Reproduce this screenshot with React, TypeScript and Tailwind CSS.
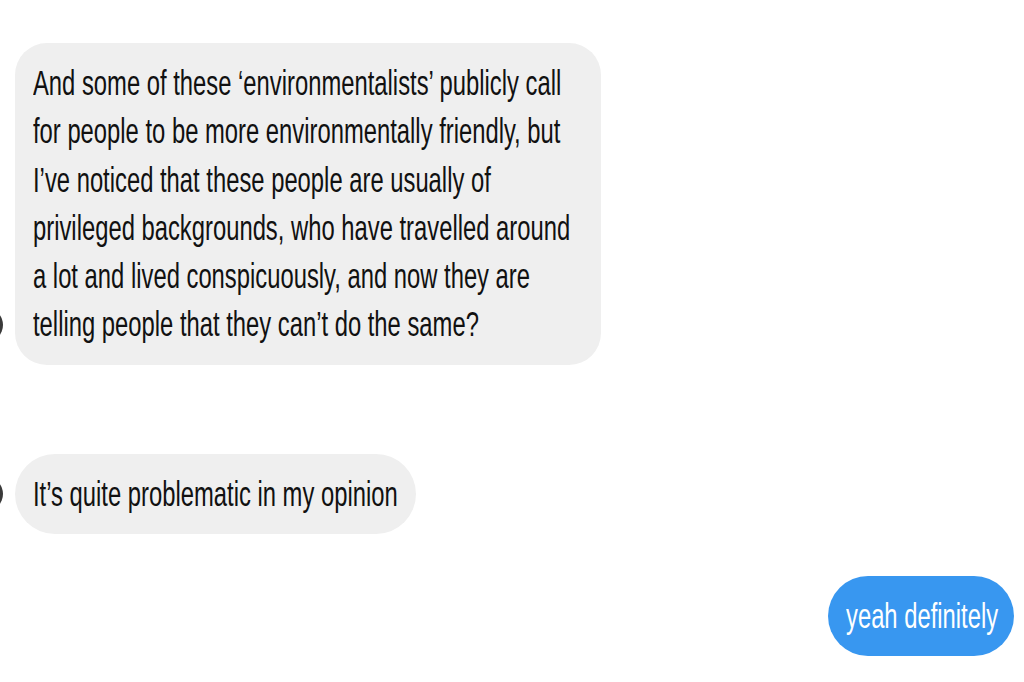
import React from "react";

const font = "font-['Liberation_Sans','Helvetica',Arial,sans-serif]";

const Avatar = () => (
  <div className="shrink-0 -ml-[31px] mb-[23px] w-[34px] h-[34px] rounded-full bg-[#3a3a3a]" />
);

const Lines = ({ lines }: { lines: string[] }) => (
  <div className="origin-top-left whitespace-nowrap scale-x-[0.68]">
    {lines.map((l) => (
      <div key={l}>{l}</div>
    ))}
  </div>
);

export default function App() {
  return (
    <div
      className={`w-[1024px] h-[682px] bg-white overflow-hidden flex flex-col pt-[43px] text-[35px] leading-[48.3px] ${font}`}
    >
      <div className="flex items-end">
        <Avatar />
        <div className="ml-[12px] w-[586px] rounded-[32px] bg-[#efefef] pl-[18px] py-4 text-[#111]">
          <Lines
            lines={[
              "And some of these \u2018environmentalists\u2019 publicly call",
              "for people to be more environmentally friendly, but",
              "I\u2019ve noticed that these people are usually of",
              "privileged backgrounds, who have travelled around",
              "a lot and lived conspicuously, and now they are",
              "telling people that they can\u2019t do the same?",
            ]}
          />
        </div>
      </div>

      <div className="flex items-end mt-[89px]">
        <Avatar />
        <div className="ml-[12px] w-[401px] rounded-[40px] bg-[#efefef] pl-[18px] py-4 text-[#111]">
          <Lines lines={["It\u2019s quite problematic in my opinion"]} />
        </div>
      </div>

      <div className="flex justify-end pr-[10px] mt-[42px]">
        <div className="w-[186px] rounded-[40px] bg-[#3897f0] pl-[18px] py-4 text-white">
          <Lines lines={["yeah definitely"]} />
        </div>
      </div>
    </div>
  );
}
